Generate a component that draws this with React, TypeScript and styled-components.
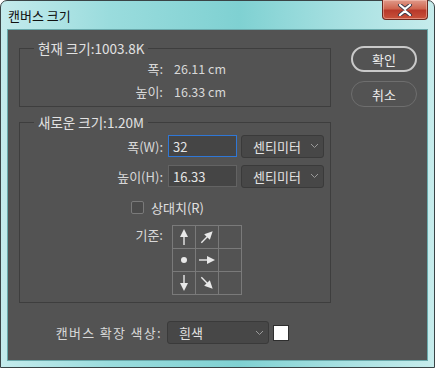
import styled, { createGlobalStyle } from "styled-components";

const GlobalStyle = createGlobalStyle`
  html, body {
    margin: 0;
    padding: 0;
    background: #ffffff;
  }
  * {
    box-sizing: border-box;
  }
`;

const Window = styled.div`
  width: 435px;
  height: 368px;
  display: flex;
  flex-direction: column;
  border: 1px solid #3a4446;
  border-radius: 7px 7px 0 0;
  background: linear-gradient(
    90deg,
    #c4ebec 0%,
    #9adcdd 25%,
    #7fd1d2 55%,
    #a9e1e2 80%,
    #c6ecec 100%
  );
  padding: 0 6px 6px 6px;
  font-family: "Noto Sans CJK KR", "Noto Sans", sans-serif;
`;

const TitleBar = styled.div`
  height: 28px;
  display: flex;
  align-items: flex-start;
  justify-content: space-between;
`;

const TitleText = styled.span`
  margin-top: 5px;
  margin-left: 1px;
  font-size: 13px;
  color: #111;
`;

const CloseButton = styled.div`
  width: 46px;
  height: 20px;
  margin-top: -1px;
  border: 1px solid #6b2a20;
  border-top: none;
  border-radius: 0 0 4px 4px;
  background: linear-gradient(180deg, #e09a8a 0%, #cf6650 45%, #b8392a 55%, #c9523b 100%);
  display: flex;
  align-items: center;
  justify-content: center;
  box-shadow: inset 0 0 0 1px rgba(255, 210, 200, 0.45);
`;

const Client = styled.div`
  flex: 1;
  background: #535353;
  border: 1px solid #6aa9ab;
  display: flex;
  flex-direction: column;
  padding: 10px 0 0 11px;
  color: #dcdcdc;
`;

const TopArea = styled.div`
  display: flex;
  flex-direction: row;
`;

const LeftColumn = styled.div`
  display: flex;
  flex-direction: column;
`;

const Group = styled.fieldset<{ $height: number; $gapTop?: number }>`
  margin: ${({ $gapTop }) => $gapTop ?? 0}px 0 0 0;
  padding: 0;
  width: 312px;
  height: ${({ $height }) => $height}px;
  border: 1px solid #3e3e3e;
  min-inline-size: 0;
  display: flex;
  flex-direction: column;
`;

const Legend = styled.legend`
  margin-left: 14px;
  padding: 0 4px;
  font-size: 13.5px;
  line-height: 16px;
  color: #e2e2e2;
`;

const Row = styled.div<{ $h: number; $top?: number }>`
  display: flex;
  align-items: center;
  height: ${({ $h }) => $h}px;
  margin-top: ${({ $top }) => $top ?? 0}px;
`;

const TopRow = styled(Row)`
  align-items: flex-start;
`;

const Label = styled.span<{ $spacing?: number }>`
  width: 143px;
  text-align: right;
  font-size: 13px;
  color: #d8d8d8;
  flex-shrink: 0;
  letter-spacing: ${({ $spacing }) => $spacing ?? 0}px;
`;

const Value = styled.span`
  margin-left: 11px;
  font-size: 12.5px;
  color: #d8d8d8;
`;

const Input = styled.div<{ $focus?: boolean }>`
  margin-left: 5px;
  width: 69px;
  height: 22px;
  background: #454545;
  border: 1px solid ${({ $focus }) => ($focus ? "#2f77d6" : "#636363")};
  font-size: 13px;
  color: #e6e6e6;
  padding-left: 4px;
  display: flex;
  align-items: center;
`;

const Select = styled.div<{ $w: number; $ml?: number }>`
  margin-left: ${({ $ml }) => $ml ?? 4}px;
  width: ${({ $w }) => $w}px;
  height: 23px;
  background: #474747;
  border: 1px solid #3a3a3a;
  border-radius: 3px;
  font-size: 13px;
  color: #e2e2e2;
  padding: 0 4px 0 11px;
  display: flex;
  align-items: center;
  justify-content: space-between;
`;

const Checkbox = styled.div`
  width: 13px;
  height: 13px;
  border: 1px solid #7a7a7a;
  border-radius: 2px;
  background: #4b4b4b;
  margin-left: 111px;
  margin-right: 7px;
`;

const CheckText = styled.span`
  font-size: 13px;
  color: #e0e0e0;
`;

const AnchorGrid = styled.div`
  margin-left: 9px;
  display: grid;
  grid-template-columns: repeat(3, 23px);
  grid-template-rows: repeat(3, 23px);
  border-left: 1px solid #7a7a7a;
  border-top: 1px solid #7a7a7a;
`;

const AnchorCell = styled.div`
  border-right: 1px solid #7a7a7a;
  border-bottom: 1px solid #7a7a7a;
  display: flex;
  align-items: center;
  justify-content: center;
`;

const RightColumn = styled.div`
  display: flex;
  flex-direction: column;
  gap: 9px;
  margin-left: 20px;
  margin-top: 6px;
`;

const PillButton = styled.div<{ $primary?: boolean }>`
  width: 66px;
  height: 26px;
  border-radius: 13px;
  border: ${({ $primary }) => ($primary ? "2px solid #c9c9c9" : "1px solid #6e6e6e")};
  display: flex;
  align-items: center;
  justify-content: center;
  font-size: 13px;
  color: #ececec;
`;

const BottomRow = styled.div`
  display: flex;
  align-items: center;
  margin-top: 18px;
`;

const ColorSwatch = styled.div`
  width: 16px;
  height: 16px;
  background: #ffffff;
  border: 1px solid #2e2e2e;
  margin-left: 4px;
`;

const Chevron = () => (
  <svg width="9" height="6" viewBox="0 0 9 6">
    <path d="M1 1 L4.5 4.5 L8 1" stroke="#9a9a9a" strokeWidth="1" fill="none" />
  </svg>
);

type Dir = "up" | "upright" | "right" | "down" | "downright" | "dot" | "none";

const Arrow = ({ dir }: { dir: Dir }) => {
  const c = "#e8e8e8";
  if (dir === "none") return null;
  if (dir === "dot")
    return (
      <svg width="14" height="14" viewBox="0 0 14 14">
        <circle cx="7" cy="7" r="3" fill={c} />
      </svg>
    );
  const rot: Record<string, number> = { up: -90, upright: -45, right: 0, down: 90, downright: 45 };
  return (
    <svg width="18" height="18" viewBox="0 0 18 18">
      <g transform={`rotate(${rot[dir]} 9 9)`}>
        <line x1="1" y1="9" x2="10" y2="9" stroke={c} strokeWidth="1.4" />
        <polygon points="9,5 17,9 9,13" fill={c} />
      </g>
    </svg>
  );
};

const anchors: Dir[] = ["up", "upright", "none", "dot", "right", "none", "down", "downright", "none"];

export default function App() {
  return (
    <>
      <GlobalStyle />
      <Window>
        <TitleBar>
          <TitleText>캔버스 크기</TitleText>
          <CloseButton>
            <svg width="16" height="12" viewBox="0 0 16 12">
              <path
                d="M3 1 L8 5 L13 1 M3 11 L8 7 L13 11"
                stroke="#3b3b4a"
                strokeWidth="4"
                fill="none"
                strokeLinecap="round"
              />
              <path
                d="M3 1 L8 5 L13 1 M3 11 L8 7 L13 11"
                stroke="#ffffff"
                strokeWidth="2.2"
                fill="none"
                strokeLinecap="round"
              />
            </svg>
          </CloseButton>
        </TitleBar>
        <Client>
          <TopArea>
            <LeftColumn>
              <Group $height={67}>
                <Legend>현재 크기:1003.8K</Legend>
                <Row $h={22} $top={1}>
                  <Label>폭:</Label>
                  <Value>26.11 cm</Value>
                </Row>
                <Row $h={24}>
                  <Label>높이:</Label>
                  <Value>16.33 cm</Value>
                </Row>
              </Group>
              <Group $height={189} $gapTop={7}>
                <Legend>새로운 크기:1.20M</Legend>
                <Row $h={24} $top={4}>
                  <Label>폭(W):</Label>
                  <Input $focus>32</Input>
                  <Select $w={83}>
                    센티미터
                    <Chevron />
                  </Select>
                </Row>
                <Row $h={24} $top={6}>
                  <Label>높이(H):</Label>
                  <Input>16.33</Input>
                  <Select $w={83}>
                    센티미터
                    <Chevron />
                  </Select>
                </Row>
                <Row $h={24} $top={7}>
                  <Checkbox />
                  <CheckText>상대치(R)</CheckText>
                </Row>
                <TopRow $h={72} $top={6}>
                  <Label>기준:</Label>
                  <AnchorGrid>
                    {anchors.map((d, i) => (
                      <AnchorCell key={i}>
                        <Arrow dir={d} />
                      </AnchorCell>
                    ))}
                  </AnchorGrid>
                </TopRow>
              </Group>
            </LeftColumn>
            <RightColumn>
              <PillButton $primary>확인</PillButton>
              <PillButton>취소</PillButton>
            </RightColumn>
          </TopArea>
          <BottomRow>
            <Label $spacing={1.3}>캔버스 확장 색상:</Label>
            <Select $w={102} $ml={5}>
              흰색
              <Chevron />
            </Select>
            <ColorSwatch />
          </BottomRow>
        </Client>
      </Window>
    </>
  );
}
